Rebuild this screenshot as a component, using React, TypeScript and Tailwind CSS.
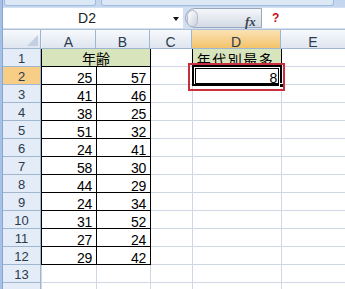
import React from "react";

// sample data for columns A and B (rows 2-12)
const ages = [
  [25, 57],
  [41, 46],
  [38, 25],
  [51, 32],
  [24, 41],
  [58, 30],
  [44, 29],
  [24, 34],
  [31, 52],
  [27, 24],
  [29, 42],
];

const rows = Array.from({ length: 14 }, (_, i) => i + 1);

const grid = "border-[#d0d7e5]";
const num = "flex items-end justify-end pr-[4px] text-[14px] leading-[12px] tracking-[-0.3px] text-black";

const ColHeader = ({ label, w, active }: { label: string; w: string; active?: boolean }) => (
  <div
    className={`${w} h-full shrink-0 border-r border-b border-[#9eb6ce] flex items-end justify-center text-[14px] leading-[12px] text-[#2b3a4d] ${
      active ? "bg-linear-to-b from-[#fbe2b4] to-[#f3c36a]" : "bg-linear-to-b from-[#f7f9fc] to-[#dfe6f0]"
    }`}
  >
    {label}
  </div>
);

const App = () => {
  return (
    <div
      className="w-[345px] h-[289px] overflow-hidden flex bg-[#c9daef]"
      style={{ fontFamily: '"Liberation Sans", "Noto Sans CJK JP", sans-serif' }}
    >
      {/* left window edge */}
      <div className="w-[3px] h-full shrink-0 bg-[#a7c1e6] border-r border-[#86a7d4]" />
      <div className="flex-1 flex flex-col min-w-0">
        {/* ribbon bottom */}
        <div className="h-[7px] shrink-0 flex gap-[5px] bg-[#c4d7ee]">
          <div className="w-[92px] h-[6px] ml-[1px] rounded-b-[3px] border-x border-b border-[#9fbbe0] bg-[#dde8f6]" />
          <div className="w-[233px] h-[6px] rounded-b-[3px] border-x border-b border-[#9fbbe0] bg-[#dde8f6]" />
        </div>

        {/* formula bar */}
        <div className="h-[23px] shrink-0 flex items-stretch bg-[#d3e0f1] border-b border-[#aebfd6]">
          <div className="w-[180px] mt-[1px] mb-[1px] bg-white flex items-center relative">
            <span className="w-[168px] text-center text-[14px] text-[#222]">D2</span>
            <svg width="6" height="4" viewBox="0 0 6 4" className="absolute left-[170px] top-[9px]">
              <polygon points="0,0 6,0 3,4" fill="#111" />
            </svg>
          </div>
          <div className="w-[2px]" />
          <div className="w-[77px] mt-[1px] mb-[1px] flex items-center rounded-l-full border border-[#9aa8bb] bg-linear-to-b from-[#f4f6f9] to-[#d4dbe5] relative">
            <div className="w-[11px] h-[17px] ml-[1px] rounded-full border border-[#b0bccc] bg-linear-to-br from-white to-[#c9d2de]" />
            <span
              className="absolute left-[59px] top-[3px] text-[13px] italic font-bold text-[#3b4350]"
              style={{ fontFamily: '"Liberation Serif", serif' }}
            >
              fx
            </span>
          </div>
          <div className="flex-1 mt-[1px] mb-[1px] bg-white flex items-center pl-[10px]">
            <span className="text-[12px] font-bold text-[#c0101a]">?</span>
          </div>
        </div>

        {/* column headers */}
        <div className="h-[19px] shrink-0 flex">
          <div className="w-[38px] h-full shrink-0 border-r border-b border-[#9eb6ce] bg-linear-to-b from-[#f7f9fc] to-[#dfe6f0] flex items-end justify-end p-[2px]">
            <svg width="11" height="11" viewBox="0 0 11 11">
              <polygon points="11,0 11,11 0,11" fill="#c3d0e2" />
            </svg>
          </div>
          <div className="w-px h-full shrink-0 border-b border-[#9eb6ce] bg-[#eef2f8]" />
          <ColHeader label="A" w="w-[54px]" />
          <ColHeader label="B" w="w-[54px]" />
          <ColHeader label="C" w="w-[42px]" />
          <ColHeader label="D" w="w-[89px]" active />
          <div className="flex-1 h-full border-b border-[#9eb6ce] bg-linear-to-b from-[#f7f9fc] to-[#dfe6f0] flex items-end justify-center text-[14px] leading-[12px] text-[#2b3a4d]">
            E
          </div>
        </div>

        {/* rows */}
        {rows.map((r) => {
          const inTable = r <= 12;
          const data = r >= 2 && r <= 12 ? ages[r - 2] : null;
          return (
            <div key={r} className="h-[18px] shrink-0 flex bg-white">
              <div
                className={`w-[38px] h-full shrink-0 border-r border-b border-[#9eb6ce] flex items-end justify-center pb-[1px] text-[13px] leading-[12px] text-[#2b3a4d] ${
                  r === 2 ? "bg-[#f8cd86]" : "bg-[#e4ecf7]"
                }`}
              >
                {r < 14 ? r : ""}
              </div>
              {r === 1 ? (
                <div
                  className="w-[110px] h-full shrink-0 border-l border-r border-b border-black bg-[#d8e4bc] flex items-center justify-center text-[14px] leading-[14px] text-black"
                  style={{ fontFamily: '"Noto Sans CJK JP", sans-serif' }}
                >
                  年齢
                </div>
              ) : (
                <>
                  <div
                    className={`w-[56px] h-full shrink-0 border-l border-r border-b ${
                      inTable ? "border-black" : grid
                    } ${num}`}
                  >
                    {data ? data[0] : ""}
                  </div>
                  <div
                    className={`w-[54px] h-full shrink-0 border-r border-b ${
                      inTable ? "border-black" : grid
                    } ${num}`}
                  >
                    {data ? data[1] : ""}
                  </div>
                </>
              )}
              <div
                className={`w-[42px] h-full shrink-0 border-b ${grid} border-r ${
                  r === 1 ? "border-r-black" : ""
                }`}
              />
              {r === 1 ? (
                <div
                  className="w-[89px] h-full shrink-0 border-r border-black bg-[#d8e4bc] flex items-center justify-center pr-[3px] pt-[1px] text-[14px] leading-[14px] tracking-[1.5px] text-black"
                  style={{ fontFamily: '"Noto Sans CJK JP", sans-serif' }}
                >
                  年代別最多
                </div>
              ) : r === 2 ? (
                <div className={`w-[89px] h-full shrink-0 border-r border-b ${grid} relative ${num}`}>
                  8
                  {/* selection frame */}
                  <div className="absolute left-[-1px] top-[-2px] w-[90px] h-[21px] border-2 border-black" />
                  <div className="absolute left-[2px] top-[1px] w-[84px] h-[16px] border border-black" />
                  {/* fill handle */}
                  <div className="absolute left-[86px] top-[16px] w-[5px] h-[5px] bg-black border border-white" />
                  {/* annotation */}
                  <div className="absolute left-[-5px] top-[-4px] w-[97px] h-[28px] border-2 border-[#c92f3d]" />
                </div>
              ) : (
                <div className={`w-[89px] h-full shrink-0 border-r border-b ${grid}`} />
              )}
              <div className={`flex-1 h-full border-b ${grid}`} />
            </div>
          );
        })}
      </div>
    </div>
  );
};

export default App;
